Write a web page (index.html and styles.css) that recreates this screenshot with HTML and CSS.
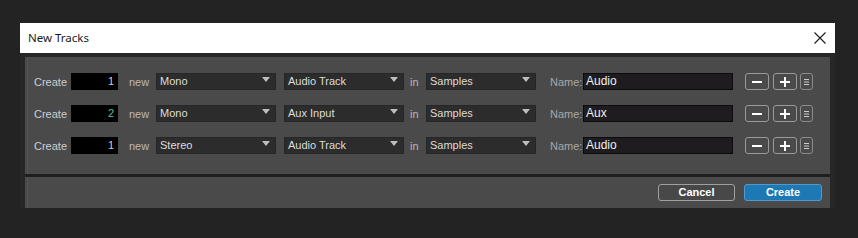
FILE: index.html
```html
<!DOCTYPE html>
<html>
<head>
<meta charset="utf-8">
<link rel="stylesheet" href="styles.css">
</head>
<body>
<div class="dialog">
  <div class="titlebar">
    <span class="title">New Tracks</span>
    <svg class="close" width="12" height="12" viewBox="0 0 12 12"><path d="M0.5 0.5 L11.5 11.5 M11.5 0.5 L0.5 11.5" stroke="#1a1a1a" stroke-width="1.1" fill="none"/></svg>
  </div>
  <div class="body">
    <div class="panel rows">
      <div class="row">
        <span class="lbl create">Create</span>
        <span class="num">1</span>
        <span class="lbl new">new</span>
        <span class="sel w120">Mono<i class="arr"></i></span>
        <span class="sel w120 gap8">Audio Track<i class="arr"></i></span>
        <span class="lbl in">in</span>
        <span class="sel w110">Samples<i class="arr"></i></span>
        <span class="lbl name">Name:</span>
        <span class="inp">Audio</span>
        <span class="btn minus"><svg width="10" height="2" viewBox="0 0 10 2"><rect width="10" height="2" fill="#fff"/></svg></span>
        <span class="btn plus"><svg width="10" height="10" viewBox="0 0 10 10"><rect y="4" width="10" height="2" fill="#fff"/><rect x="4" width="2" height="10" fill="#fff"/></svg></span>
        <span class="btn menu"><svg width="5" height="6" viewBox="0 0 5 6"><rect width="5" height="1" y="0" fill="#ccc"/><rect width="5" height="1" y="2.5" fill="#ccc"/><rect width="5" height="1" y="5" fill="#ccc"/></svg></span>
      </div>
      <div class="row">
        <span class="lbl create">Create</span>
        <span class="num teal">2</span>
        <span class="lbl new">new</span>
        <span class="sel w120">Mono<i class="arr"></i></span>
        <span class="sel w120 gap8">Aux Input<i class="arr"></i></span>
        <span class="lbl in">in</span>
        <span class="sel w110">Samples<i class="arr"></i></span>
        <span class="lbl name">Name:</span>
        <span class="inp">Aux</span>
        <span class="btn minus"><svg width="10" height="2" viewBox="0 0 10 2"><rect width="10" height="2" fill="#fff"/></svg></span>
        <span class="btn plus"><svg width="10" height="10" viewBox="0 0 10 10"><rect y="4" width="10" height="2" fill="#fff"/><rect x="4" width="2" height="10" fill="#fff"/></svg></span>
        <span class="btn menu"><svg width="5" height="6" viewBox="0 0 5 6"><rect width="5" height="1" y="0" fill="#ccc"/><rect width="5" height="1" y="2.5" fill="#ccc"/><rect width="5" height="1" y="5" fill="#ccc"/></svg></span>
      </div>
      <div class="row">
        <span class="lbl create">Create</span>
        <span class="num">1</span>
        <span class="lbl new">new</span>
        <span class="sel w120">Stereo<i class="arr"></i></span>
        <span class="sel w120 gap8">Audio Track<i class="arr"></i></span>
        <span class="lbl in">in</span>
        <span class="sel w110">Samples<i class="arr"></i></span>
        <span class="lbl name">Name:</span>
        <span class="inp">Audio</span>
        <span class="btn minus"><svg width="10" height="2" viewBox="0 0 10 2"><rect width="10" height="2" fill="#fff"/></svg></span>
        <span class="btn plus"><svg width="10" height="10" viewBox="0 0 10 10"><rect y="4" width="10" height="2" fill="#fff"/><rect x="4" width="2" height="10" fill="#fff"/></svg></span>
        <span class="btn menu"><svg width="5" height="6" viewBox="0 0 5 6"><rect width="5" height="1" y="0" fill="#ccc"/><rect width="5" height="1" y="2.5" fill="#ccc"/><rect width="5" height="1" y="5" fill="#ccc"/></svg></span>
      </div>
    </div>
    <div class="sep"></div>
    <div class="panel footer">
      <span class="fbtn cancel">Cancel</span>
      <span class="fbtn ok">Create</span>
    </div>
  </div>
</div>
</body>
</html>
```
FILE: styles.css
```css
* { box-sizing: border-box; }
html, body { margin: 0; padding: 0; }
body {
  width: 858px;
  height: 238px;
  background: #232323;
  font-family: "Liberation Sans", Arial, sans-serif;
  font-size: 11px;
  overflow: hidden;
  padding-top: 23px;
}
.dialog {
  margin-left: 20px;
  width: 815px;
  background: #272727;
}
.titlebar {
  height: 30px;
  background: #ffffff;
  display: flex;
  align-items: center;
  padding-left: 8px;
  padding-right: 9px;
}
.title {
  font-family: "Noto Sans", "Liberation Sans", sans-serif;
  font-size: 11.5px;
  color: #1a1a1a;
  flex: 1;
  position: relative;
  top: -1px;
}
.close { display: block; }
.body {
  padding: 4px 5px 0 5px;
}
.panel {
  background: #4a4a4a;
  box-shadow: inset 2px 0 0 #4a4a4a, inset 3px 0 0 #545454;
}
.rows {
  height: 117px;
  padding: 16px 0 0 9px;
  display: flex;
  flex-direction: column;
  gap: 15px;
}
.row {
  display: flex;
  align-items: center;
  height: 17px;
}
.lbl { color: #c8c8c8; white-space: nowrap; }
.create { width: 37px; color: #cdcdcd; }
.new { margin-left: 11px; width: 27px; color: #b9b9b9; }
.in { margin-left: 6px; width: 16px; color: #b9b9b9; }
.name { margin-left: 14px; width: 33px; color: #a8a8a8; }
.num {
  width: 47px;
  height: 17px;
  background: #000;
  color: #cfcfcf;
  text-align: right;
  padding-right: 4px;
  line-height: 17px;
}
.num.teal { color: #55c0a0; }
.sel {
  position: relative;
  height: 17px;
  background: #2c2c2c;
  border: 1px solid #262626;
  color: #dcdcdc;
  line-height: 15px;
  padding-left: 3px;
}
.w120 { width: 120px; }
.w110 { width: 110px; }
.gap8 { margin-left: 8px; }
.arr {
  position: absolute;
  right: 5px;
  top: 3px;
  width: 0;
  height: 0;
  border-left: 4px solid transparent;
  border-right: 4px solid transparent;
  border-top: 5px solid #bdbdbd;
}
.inp {
  width: 150px;
  height: 17px;
  background: #1e1c1f;
  border: 1px solid #0c0c0c;
  color: #f0f0f0;
  font-size: 12px;
  line-height: 15px;
  padding-left: 2px;
}
.btn {
  height: 17px;
  border: 1px solid #9a9a9a;
  border-radius: 3px;
  display: flex;
  align-items: center;
  justify-content: center;
  background: #4a4a4a;
}
.btn svg { display: block; }
.minus { margin-left: 12px; width: 24px; }
.plus { margin-left: 4px; width: 24px; }
.menu { margin-left: 3px; width: 13px; border-color: #8a8a8a; }
.sep { height: 3px; background: #1f1f1f; }
.footer {
  height: 31px;
  display: flex;
  justify-content: flex-end;
  align-items: flex-start;
  padding: 7px 8px 0 0;
  gap: 9px;
}
.fbtn {
  height: 17px;
  border-radius: 3px;
  color: #fff;
  font-weight: bold;
  font-size: 11px;
  line-height: 15px;
  text-align: center;
}
.cancel { width: 77px; background: #484848; border: 1px solid #a0a0a0; }
.ok { width: 78px; background: #1e78b4; border: 1px solid #4f9bd0; }
```
